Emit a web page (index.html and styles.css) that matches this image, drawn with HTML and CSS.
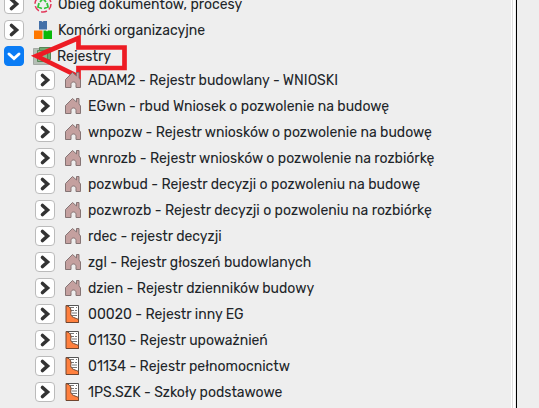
FILE: index.html
```
<!DOCTYPE html>
<html lang="pl">
<head>
    <meta charset="UTF-8">
    <meta name="viewport" content="width=device-width, initial-scale=1.0">
    <title>Rejestry</title>
    <link rel="stylesheet" href="styles.css">
</head>
<body>
    <!-- wspólne ikony -->
    <svg class="icon-defs" aria-hidden="true">
        <symbol id="chevron" viewBox="0 0 18 18">
            <path d="M6.500 4.500l5 4.500-5 4.500" fill="none" stroke="#333" stroke-width="3.600" stroke-linecap="round"/>
        </symbol>
        <symbol id="house" viewBox="0 0 18 18">
            <path d="M1.500 8.500L8.500 1.500l4 3.500V1.500h2.500V7l1.500 2v7.500h-4.500v-3c0-3.400-5-3.400-5 0v3H1.500z" fill="#c4a09f" stroke="#857474"/>
        </symbol>
        <symbol id="register" viewBox="0 0 18 18">
            <path d="M2.500.5h12v17h-12z" fill="#fff" stroke="#555"/>
            <path d="M6 2.500h4M12 2.500h1M7 5.500h3M11 5.500h2M8 8h5M8 10.500h5" stroke="#777"/>
            <path d="M2 .5C5 1 7 3 7 6c0 3-1 3 1 5.500 2 1.500 4 1.500 6.500 3v3H2z" fill="#ff803e" stroke="#70452f"/>
        </symbol>
    </svg>

    <div class="app">
        <nav class="tree-pane">
            <ul class="tree">
                <li>
                    <div class="row">
                        <button class="toggle" aria-label="Rozwiń"><svg><use href="#chevron"/></svg></button>
                        <svg class="icon icon-root" viewBox="0 0 18 18">
                            <circle cx="9" cy="9" r="8" fill="none" stroke="#e2385a" stroke-width="1.500" stroke-dasharray="6 2.400"/>
                            <path d="M6 7l3-3.500L12 7M13 8l1 4-4 1.500M8 13.500L4 12l1-4" fill="none" stroke="#35c43c" stroke-width="1.800"/>
                        </svg>
                        <span class="label">Obieg dokumentów, procesy</span>
                    </div>
                </li>
                <li>
                    <div class="row">
                        <button class="toggle" aria-label="Rozwiń"><svg><use href="#chevron"/></svg></button>
                        <svg class="icon icon-root" viewBox="0 0 18 18">
                            <path d="M5 0h2.500l1 1 1-1H13v8.500H5z" fill="#4470a8"/>
                            <path d="M0 9.500h8.500V18H0z" fill="#ff7800"/>
                            <path d="M9.500 9.500H12l1 1 1-1h4V18H9.500z" fill="#0ab80a"/>
                        </svg>
                        <span class="label">Komórki organizacyjne</span>
                    </div>
                </li>
                <li>
                    <div class="row">
                        <button class="toggle toggle-open" aria-label="Zwiń" aria-expanded="true">
                            <svg viewBox="0 0 18 18"><path d="M4 7l5 4.500L14 7" fill="none" stroke="#fff" stroke-width="3" stroke-linecap="round"/></svg>
                        </button>
                        <svg class="icon" viewBox="0 0 18 18">
                            <path d="M.5 1.500h16v16H.5z" fill="#b5bfb5" stroke="#a5aaa5"/>
                            <path d="M6.500.5h11v12h-11z" fill="#70a870" stroke="#578557"/>
                            <path d="M4.500 3.500h10v11h-10z" fill="#8bb98b" stroke="#578557"/>
                        </svg>
                        <span class="label">Rejestry</span>
                        <svg class="arrow" viewBox="0 0 100 50" aria-hidden="true">
                            <path d="M8.500 24L50.500 6v9.500h46V36h-46v8.500z" fill="none" stroke="#ed1c24" stroke-width="4.700"/>
                        </svg>
                    </div>
                    <ul class="subtree">
                        <li class="row"><button class="toggle" aria-label="Rozwiń"><svg><use href="#chevron"/></svg></button><svg class="icon"><use href="#house"/></svg><span class="label">ADAM2 - Rejestr budowlany - WNIOSKI</span></li>
                        <li class="row"><button class="toggle" aria-label="Rozwiń"><svg><use href="#chevron"/></svg></button><svg class="icon"><use href="#house"/></svg><span class="label">EGwn - rbud Wniosek o pozwolenie na budowę</span></li>
                        <li class="row"><button class="toggle" aria-label="Rozwiń"><svg><use href="#chevron"/></svg></button><svg class="icon"><use href="#house"/></svg><span class="label">wnpozw - Rejestr wniosków o pozwolenie na budowę</span></li>
                        <li class="row"><button class="toggle" aria-label="Rozwiń"><svg><use href="#chevron"/></svg></button><svg class="icon"><use href="#house"/></svg><span class="label">wnrozb - Rejestr wniosków o pozwolenie na rozbiórkę</span></li>
                        <li class="row"><button class="toggle" aria-label="Rozwiń"><svg><use href="#chevron"/></svg></button><svg class="icon"><use href="#house"/></svg><span class="label">pozwbud - Rejestr decyzji o pozwoleniu na budowę</span></li>
                        <li class="row"><button class="toggle" aria-label="Rozwiń"><svg><use href="#chevron"/></svg></button><svg class="icon"><use href="#house"/></svg><span class="label">pozwrozb - Rejestr decyzji o pozwoleniu na rozbiórkę</span></li>
                        <li class="row"><button class="toggle" aria-label="Rozwiń"><svg><use href="#chevron"/></svg></button><svg class="icon"><use href="#house"/></svg><span class="label">rdec - rejestr decyzji</span></li>
                        <li class="row"><button class="toggle" aria-label="Rozwiń"><svg><use href="#chevron"/></svg></button><svg class="icon"><use href="#house"/></svg><span class="label">zgl - Rejestr głoszeń budowlanych</span></li>
                        <li class="row"><button class="toggle" aria-label="Rozwiń"><svg><use href="#chevron"/></svg></button><svg class="icon"><use href="#house"/></svg><span class="label">dzien - Rejestr dzienników budowy</span></li>
                        <li class="row"><button class="toggle" aria-label="Rozwiń"><svg><use href="#chevron"/></svg></button><svg class="icon"><use href="#register"/></svg><span class="label">00020 - Rejestr inny EG</span></li>
                        <li class="row"><button class="toggle" aria-label="Rozwiń"><svg><use href="#chevron"/></svg></button><svg class="icon"><use href="#register"/></svg><span class="label">01130 - Rejestr upoważnień</span></li>
                        <li class="row"><button class="toggle" aria-label="Rozwiń"><svg><use href="#chevron"/></svg></button><svg class="icon"><use href="#register"/></svg><span class="label">01134 - Rejestr pełnomocnictw</span></li>
                        <li class="row"><button class="toggle" aria-label="Rozwiń"><svg><use href="#chevron"/></svg></button><svg class="icon"><use href="#register"/></svg><span class="label">1PS.SZK - Szkoły podstawowe</span></li>
                    </ul>
                </li>
            </ul>
        </nav>
        <div class="splitter"></div>
        <main class="content"></main>
    </div>
</body>
</html>
```

FILE: styles.css
```
body {
    margin: 0;
    background-color: #eee;
    color: #212529;
    font-family: Rubik, Roboto, "Liberation Sans", sans-serif;
    font-size: 14px;
    line-height: 18px;
}
.icon-defs {
    display: none;
}
.app {
    display: flex;
    height: 100vh;
    overflow: hidden;
}
.tree-pane {
    flex: 1;
    min-width: 0;
    overflow: hidden;
    border-right: 1px solid #fff;
}
.tree,
.subtree {
    list-style: none;
    margin: 0;
    padding: 0;
}
/* lista przewinięta w górę */
.tree {
    margin-top: -9px;
    padding-left: 4px;
}
.subtree {
    margin-top: -2px;
    padding-left: 31px;
}
.row {
    position: relative;
    display: flex;
    align-items: center;
    height: 26px;
    white-space: nowrap;
}
.label {
    padding-top: 2px;
}
.toggle {
    width: 20px;
    height: 20px;
    padding: 0;
    border: 1px solid #bbb;
    border-radius: 4px;
    background-color: #fff;
    cursor: pointer;
}
.toggle svg {
    display: block;
    width: 18px;
    height: 18px;
}
.toggle-open {
    border-color: #0a7cf5;
    background-color: #0a7cf5;
}
.icon {
    width: 18px;
    height: 18px;
    margin: 0 6px 0 9px;
}
.icon-root {
    margin-left: 10px;
}
/* strzałka wskazująca rozwinięty węzeł */
.arrow {
    position: absolute;
    left: 24px;
    top: -11px;
    width: 100px;
    height: 50px;
    pointer-events: none;
}
.splitter {
    width: 2px;
    border-left: 1px solid #ddd;
    border-right: 1px solid #eee;
    background-color: #fff;
    cursor: col-resize;
}
.content {
    width: 22px;
    border-left: 1px solid #000;
}
```
